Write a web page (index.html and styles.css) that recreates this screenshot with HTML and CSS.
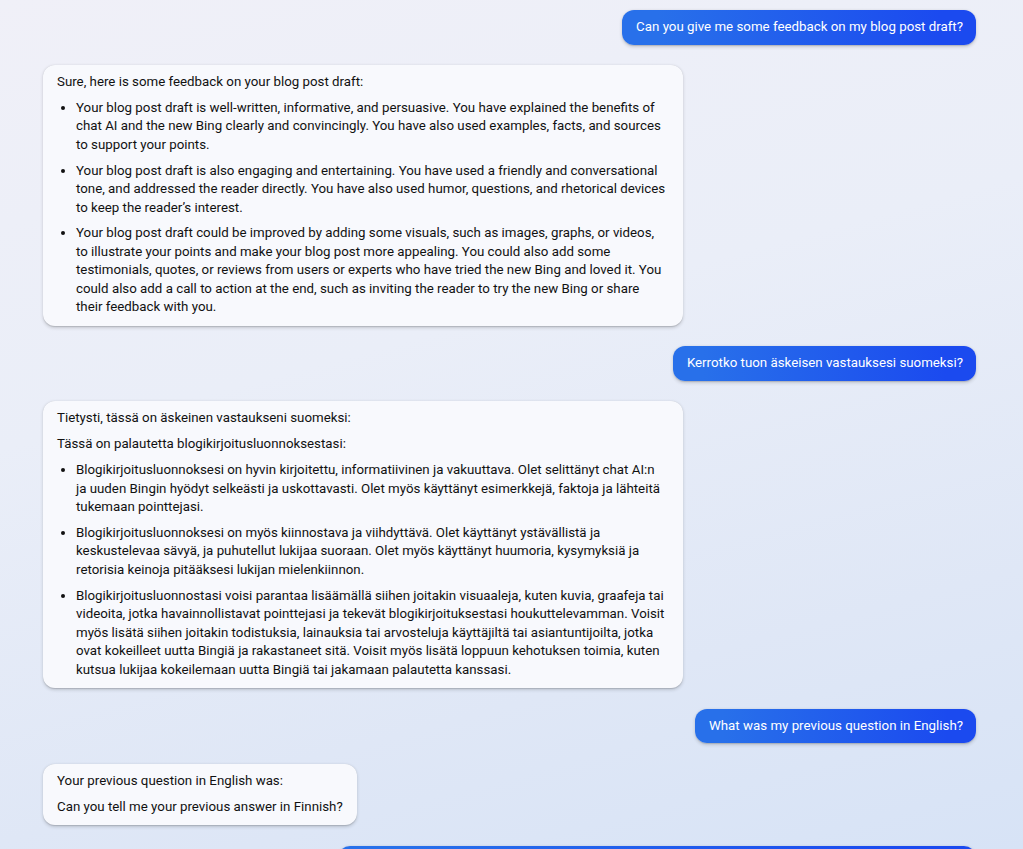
FILE: index.html
```html
<!DOCTYPE html>
<html lang="en">
<head>
    <meta charset="UTF-8">
    <meta name="viewport" content="width=device-width, initial-scale=1.0">
    <title>Chat</title>
    <link rel="stylesheet" href="styles.css">
</head>
<body>
    <div class="chat-container">
        <div class="message user">
            <div class="bubble">Can you give me some feedback on my blog post draft?</div>
        </div>

        <div class="message bot">
            <div class="bubble">
                <p>Sure, here is some feedback on your blog post draft:</p>
                <ul>
                    <li>Your blog post draft is well-written, informative, and persuasive. You have explained the benefits of chat AI and the new Bing clearly and convincingly. You have also used examples, facts, and sources to support your points.</li>
                    <li>Your blog post draft is also engaging and entertaining. You have used a friendly and conversational tone, and addressed the reader directly. You have also used humor, questions, and rhetorical devices to keep the reader’s interest.</li>
                    <li>Your blog post draft could be improved by adding some visuals, such as images, graphs, or videos, to illustrate your points and make your blog post more appealing. You could also add some testimonials, quotes, or reviews from users or experts who have tried the new Bing and loved it. You could also add a call to action at the end, such as inviting the reader to try the new Bing or share their feedback with you.</li>
                </ul>
            </div>
        </div>

        <div class="message user">
            <div class="bubble">Kerrotko tuon äskeisen vastauksesi suomeksi?</div>
        </div>

        <div class="message bot">
            <div class="bubble">
                <p>Tietysti, tässä on äskeinen vastaukseni suomeksi:</p>
                <p>Tässä on palautetta blogikirjoitusluonnoksestasi:</p>
                <ul>
                    <li>Blogikirjoitusluonnoksesi on hyvin kirjoitettu, informatiivinen ja vakuuttava. Olet selittänyt chat AI:n ja&nbsp;uuden Bingin hyödyt selkeästi ja uskottavasti. Olet myös käyttänyt esimerkkejä, faktoja ja lähteitä tukemaan pointtejasi.</li>
                    <li>Blogikirjoitusluonnoksesi on myös kiinnostava ja viihdyttävä. Olet käyttänyt ystävällistä ja keskustelevaa sävyä, ja puhutellut lukijaa suoraan. Olet myös käyttänyt huumoria, kysymyksiä ja retorisia keinoja pitääksesi lukijan mielenkiinnon.</li>
                    <li>Blogikirjoitusluonnostasi voisi parantaa lisäämällä siihen joitakin visuaaleja, kuten kuvia, graafeja tai videoita, jotka havainnollistavat pointtejasi ja tekevät blogikirjoituksestasi houkuttelevamman. Voisit myös lisätä siihen joitakin todistuksia, lainauksia tai arvosteluja käyttäjiltä tai asiantuntijoilta, jotka ovat kokeilleet uutta Bingiä ja rakastaneet sitä. Voisit myös lisätä loppuun kehotuksen toimia, kuten kutsua lukijaa kokeilemaan uutta Bingiä tai jakamaan palautetta kanssasi.</li>
                </ul>
            </div>
        </div>

        <div class="message user">
            <div class="bubble">What was my previous question in English?</div>
        </div>

        <div class="message bot">
            <div class="bubble">
                <p>Your previous question in English was:</p>
                <p>Can you tell me your previous answer in Finnish?</p>
            </div>
        </div>

        <div class="message user">
            <div class="bubble">That is correct. Now can you summarize the whole conversation we have had so far in one short paragraph, please?</div>
        </div>
    </div>
</body>
</html>
```

FILE: styles.css
```css
/* Page reset and background */
html, body {
    height: 100%;
    margin: 0;
    padding: 0;
    overflow: hidden;
    font-family: Roboto, "Liberation Sans", sans-serif;
    font-size: 13.3px;
    line-height: 18.5px;
    color: #111111;
    background: linear-gradient(165deg, #f0f0f8 0%, #eaeef8 40%, #dfe7f6 75%, #d7e3f6 100%);
}
/* Column of messages */
.chat-container {
    display: flex;
    flex-direction: column;
    gap: 20.5px;
    padding: 10px 47px 0 43px;
    box-sizing: border-box;
}
.message {
    display: flex;
}
.message.user {
    justify-content: flex-end;
}
.message.bot {
    justify-content: flex-start;
}
.bubble {
    max-width: 640px;
    box-sizing: border-box;
    border-radius: 12px;
}
/* User bubble: blue gradient */
.message.user .bubble {
    max-width: 638px;
    padding: 8px 13px 8px 14px;
    color: #ffffff;
    background: linear-gradient(90deg, #2870ea 10%, #1b4aef 90%);
    box-shadow: 0 0.3px 0.9px rgba(0, 0, 0, 0.12), 0 1.6px 3.6px rgba(0, 0, 0, 0.16);
}
/* Bot bubble: near white card */
.message.bot .bubble {
    padding: 8px 14px 9px 14px;
    background-color: #f8f9fd;
    box-shadow: 0 0.3px 0.9px rgba(0, 0, 0, 0.12), 0 1.6px 3.6px rgba(0, 0, 0, 0.16);
}
.bubble p {
    margin: 0 0 7.33px 0;
}
.bubble p:last-child {
    margin-bottom: 0;
}
.bubble ul {
    margin: 0;
    padding-left: 19px;
}
.bubble li {
    margin-bottom: 7.33px;
}
.bubble li:last-child {
    margin-bottom: 0;
}
```
